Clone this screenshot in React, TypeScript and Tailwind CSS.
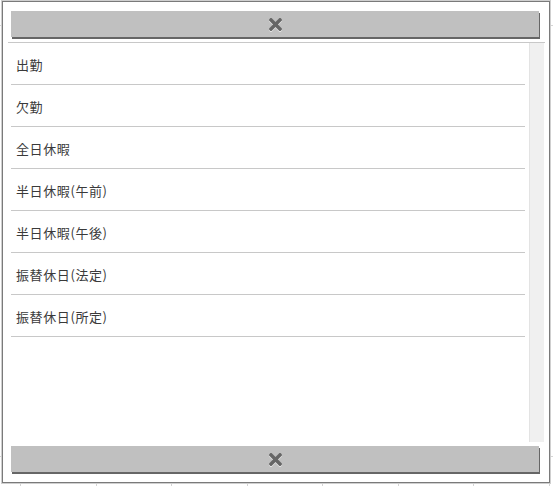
import { Fragment } from 'react'

const items = ['出勤', '欠勤', '全日休暇', '半日休暇(午前)', '半日休暇(午後)', '振替休日(法定)', '振替休日(所定)']

function CloseIcon() {
  return (
    <svg viewBox="0 80 352 352" width="13" height="13" className="drop-shadow-[0_1px_0_rgba(255,255,255,0.6)]">
      <path
        fill="#666"
        d="M242.72 256l100.07-100.07c12.28-12.28 12.28-32.19 0-44.48l-22.24-22.24c-12.28-12.28-32.19-12.28-44.48 0L176 189.28 75.93 89.21c-12.28-12.28-32.19-12.28-44.48 0L9.21 111.45c-12.28 12.28-12.28 32.19 0 44.48L109.28 256 9.21 356.07c-12.28 12.28-12.28 32.19 0 44.48l22.24 22.24c12.28 12.28 32.2 12.28 44.48 0L176 322.72l100.07 100.07c12.28 12.28 32.2 12.28 44.48 0l22.24-22.24c12.28-12.28 12.28-32.19 0-44.48L242.72 256z"
      />
    </svg>
  )
}

function CloseButton({ className }: { className?: string }) {
  return (
    <button
      type="button"
      className={
        'ml-[8px] flex h-[26px] w-[528px] shrink-0 items-center justify-center bg-[#c0c0c0] shadow-[1px_2px_0_#666] ' +
        (className ?? '')
      }
    >
      <CloseIcon />
    </button>
  )
}

export default function App() {
  return (
    <div className="relative h-[486px] w-[553px] overflow-hidden bg-white font-['Noto_Sans_CJK_JP','Noto_Sans',sans-serif]">
      {/* calendar grid behind the dialog */}
      <div className="absolute inset-0 flex pl-[20px]">
        {Array.from({ length: 8 }).map((_, i) => (
          <div key={i} className="h-full w-[75.5px] shrink-0 border-l border-[#d4d4d4]" />
        ))}
      </div>
      <div className="absolute left-0 right-0 top-[25px] border-t border-[#d4d4d4]" />
      <div className="absolute left-0 right-0 top-[456px] border-t border-[#d4d4d4]" />

      <div className="absolute left-[2px] top-[1px] flex h-[482px] w-[548px] flex-col border border-[#7a7a7a] bg-white pt-[9px] shadow-[0_0_0_1px_#cfcfcf]">
        <CloseButton />

        <div className="ml-[5px] mt-[5px] flex h-[400px] w-[537px] border-t border-[#c8c8c8]">
          <div className="flex-1 pl-[3px] pr-[4px]">
            {items.map((label) => (
              <Fragment key={label}>
                <div className="flex h-[42px] items-center border-b border-[#c8c8c8] pl-[5px] pt-[2px] text-[13px] tracking-[0.6px] text-[#3a3a3a]">
                  {label}
                </div>
              </Fragment>
            ))}
          </div>
          <div className="mr-[1px] h-full w-[15px] border-l border-[#e3e3e3] bg-[#f0f0f0]" />
        </div>

        <CloseButton className="mt-[4px]" />
      </div>
    </div>
  )
}
